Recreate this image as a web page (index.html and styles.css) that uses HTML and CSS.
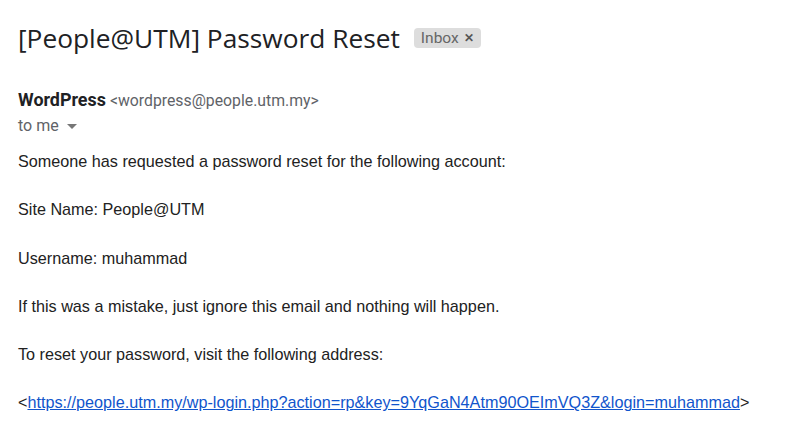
FILE: index.html
```html
<!DOCTYPE html>
<html>
<head>
<meta charset="utf-8">
<link rel="stylesheet" href="styles.css">
</head>
<body>
<div class="page">
  <div class="subject-row">
    <h1 class="subject">[People@UTM] Password Reset</h1>
    <span class="chip">Inbox <span class="chip-x">&#x2715;</span></span>
  </div>
  <div class="sender">
    <span class="name">WordPress</span>
    <span class="addr">&lt;wordpress@people.utm.my&gt;</span>
  </div>
  <div class="recipient">to me <span class="caret"></span></div>
  <div class="body">
    <p>Someone has requested a password reset for the following account:</p>
    <p>Site Name: People@UTM</p>
    <p>Username: muhammad</p>
    <p>If this was a mistake, just ignore this email and nothing will happen.</p>
    <p>To reset your password, visit the following address:</p>
    <p>&lt;<a href="#">https://people.utm.my/wp-login.php?action=rp&amp;key=9YqGaN4Atm90OEImVQ3Z&amp;login=muhammad</a>&gt;</p>
  </div>
</div>
</body>
</html>
```

FILE: styles.css
```css
html, body {
  margin: 0;
  padding: 0;
  background: #fff;
}
.page {
  padding: 18px 18px 0 18px;
}
.subject-row {
  display: flex;
  align-items: center;
  height: 40px;
}
.subject {
  margin: 0;
  font-family: "Open Sans", sans-serif;
  font-weight: 400;
  font-size: 26.3px;
  color: #202124;
  letter-spacing: 0;
}
.chip {
  margin-left: 14px;
  background: #dddddd;
  border-radius: 4px;
  padding: 1px 7px;
  font-family: Roboto, sans-serif;
  font-size: 15.5px;
  color: #666;
  display: inline-flex;
  align-items: center;
  gap: 5px;
}
.chip-x {
  font-size: 11.5px;
  font-weight: 700;
  color: #555;
}
.sender {
  margin-top: 32px;
  font-family: Roboto, sans-serif;
  line-height: 20px;
}
.name {
  font-weight: 700;
  font-size: 17.9px;
  color: #202124;
}
.addr {
  font-size: 15.8px;
  color: #5f6368;
}
.recipient {
  margin-top: 6px;
  font-family: Roboto, sans-serif;
  font-size: 16px;
  color: #5f6368;
  line-height: 18px;
}
.caret {
  display: inline-block;
  width: 0;
  height: 0;
  border-left: 5.5px solid transparent;
  border-right: 5.5px solid transparent;
  border-top: 5.5px solid #777;
  margin-left: 4px;
  vertical-align: middle;
}
.body {
  margin-top: 17px;
  font-family: "Liberation Sans", Arial, sans-serif;
  font-size: 16.2px;
  color: #222;
}
.body p {
  margin: 0 0 29.3px 0;
  line-height: 19px;
}
.body a {
  color: #1155cc;
  text-decoration: underline;
}
```
